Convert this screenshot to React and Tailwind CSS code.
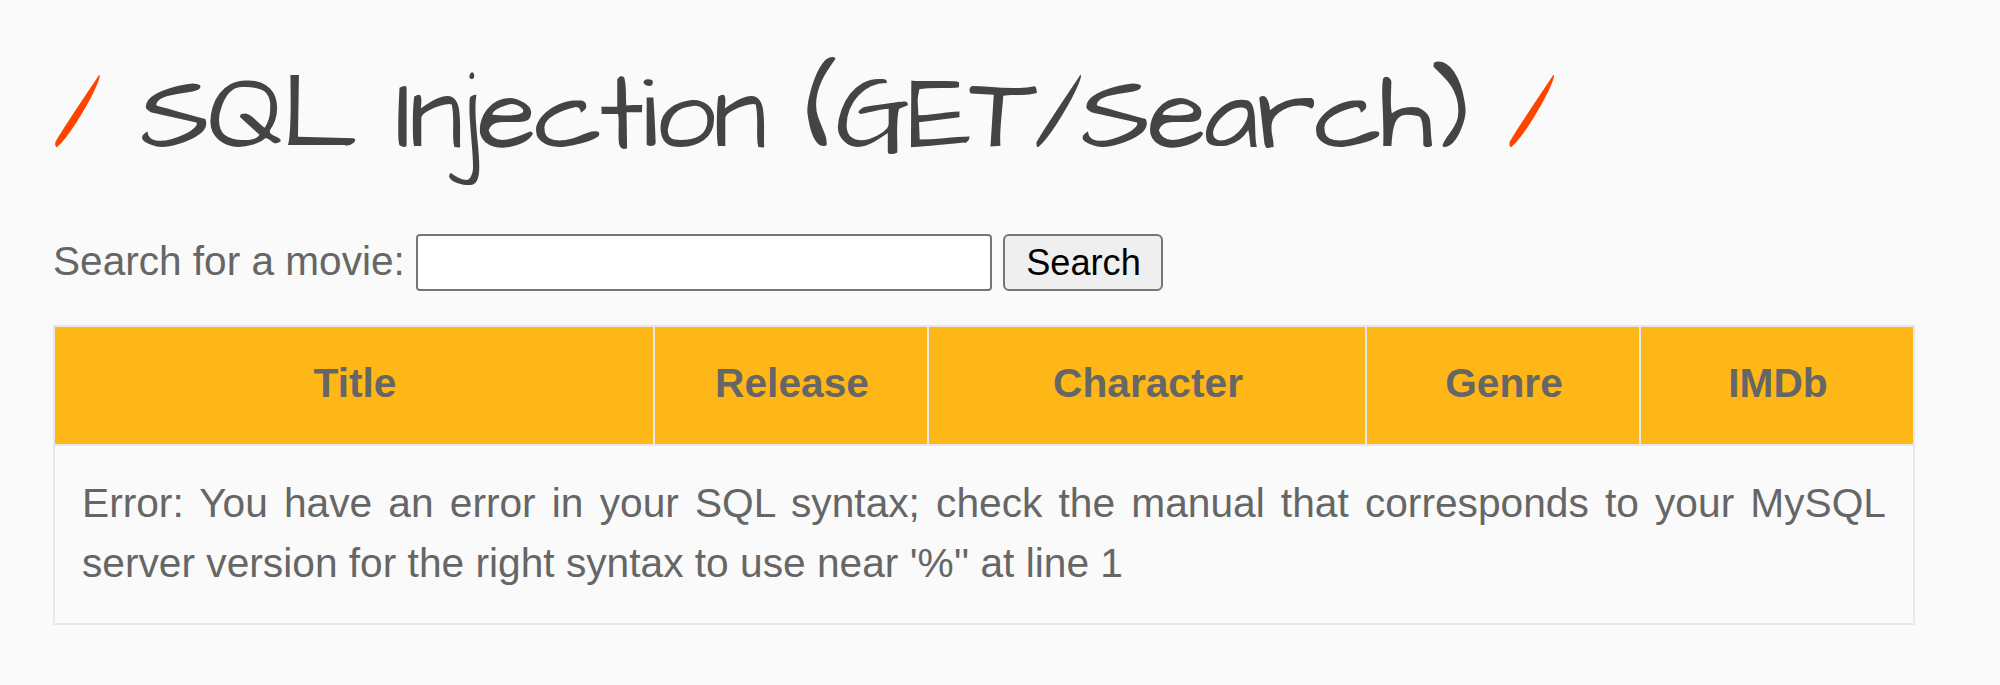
const columns = ["Title", "Release", "Character", "Genre", "IMDb"];

export default function App() {
  return (
    <main className="flex h-[685px] w-[2000px] flex-col overflow-hidden bg-[#fafafa] pl-[53px] pt-[56px] font-['Liberation_Sans',Arial,sans-serif] text-[40.7px] leading-[60px] text-[#666666]">
      <h1 className="h-[120px] whitespace-nowrap font-['Architects_Daughter','Lato',sans-serif] text-[108px] font-normal leading-[120px] tracking-[-2.4px] text-[#444444]">
        <span className="text-[#ff4400]">/</span> SQL Injection (GET/Search) <span className="text-[#ff4400]">/</span>
      </h1>
      <form className="mt-[58px] flex h-[57px] items-center" onSubmit={(e) => e.preventDefault()}>
        <label htmlFor="title" className="w-[363px] shrink-0 whitespace-nowrap pb-[3px] text-[40.6px]">Search for a movie:</label>
        <input id="title" className="h-[57px] w-[576px] rounded-[4px] border-2 border-[#767676] bg-white px-2 outline-none" />
        <button className="ml-[11px] h-[57px] w-[160px] rounded-[6px] border-2 border-[#767676] bg-[#efefef] pl-px text-[36.2px] leading-[53px] text-black">Search</button>
      </form>
      <table className="mt-[34px] w-[1862px] table-fixed border-collapse">
        <colgroup>
          <col className="w-[600px]" />
          <col className="w-[274px]" />
          <col className="w-[438px]" />
          <col className="w-[274px]" />
          <col className="w-[274px]" />
        </colgroup>
        <thead>
          <tr className="h-[119px] bg-[#ffb717]">
            {columns.map((c) => (
              <th key={c} className="border-2 border-[#e8e8ea] pb-[5px] pl-[2px] text-center font-bold">{c}</th>
            ))}
          </tr>
        </thead>
        <tbody>
          <tr className="h-[179px]">
            <td colSpan={5} className="border-2 border-[#e8e8ea] pl-[27px] pr-[27px] pt-[27px] text-justify align-top">
              Error: You have an error in your SQL syntax; check the manual that corresponds to your MySQL server version for the right syntax to use near '%'' at line 1
            </td>
          </tr>
        </tbody>
      </table>
    </main>
  );
}
